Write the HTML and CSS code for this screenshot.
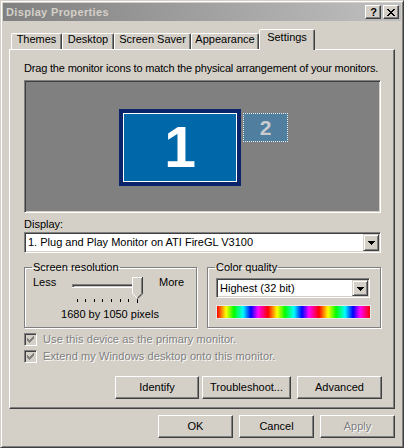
FILE: index.html
```html
<!DOCTYPE html>
<html>
<head>
<meta charset="utf-8">
<title>Display Properties</title>
<link rel="stylesheet" href="styles.css">
</head>
<body>
<div class="window">
  <div class="titlebar">
    <span class="title">Display Properties</span>
    <div class="caption-btns">
      <span class="cbtn help">?</span>
      <span class="cbtn close"><svg width="8" height="7" viewBox="0 0 8 7" shape-rendering="crispEdges"><path fill="#000" d="M0 0h2v1h-2z M6 0h2v1h-2z M1 1h2v1h-2z M5 1h2v1h-2z M2 2h4v1h-4z M3 3h2v1h-2z M2 4h4v1h-4z M1 5h2v1h-2z M5 5h2v1h-2z M0 6h2v1h-2z M6 6h2v1h-2z"/></svg></span>
    </div>
  </div>
  <div class="client">
    <div class="tabs">
      <span class="tab w-themes">Themes</span>
      <span class="tab w-desktop">Desktop</span>
      <span class="tab w-saver">Screen Saver</span>
      <span class="tab w-appear">Appearance</span>
      <span class="tab sel">Settings</span>
    </div>
    <div class="panel">
      <p class="hint">Drag the monitor icons to match the physical arrangement of your monitors.</p>
      <div class="monitors">
        <div class="mon mon1"><div class="mon1-inner">1</div></div>
        <div class="mon mon2">2</div>
      </div>
      <div class="label">Display:</div>
      <div class="combo wide">
        <span class="combo-text">1. Plug and Play Monitor on ATI FireGL V3100</span>
        <span class="drop"><svg width="7" height="4" viewBox="0 0 7 4" shape-rendering="crispEdges"><path fill="#000" d="M0 0h7v1h-1v1h-1v1h-1v1h-1v-1h-1v-1h-1v-1h-1z"/></svg></span>
      </div>
      <div class="groups">
        <fieldset class="group res">
          <legend>Screen resolution</legend>
          <div class="slider-row">
            <span class="less">Less</span>
            <svg class="slider" width="76" height="28" viewBox="0 0 76 28">
              <g shape-rendering="crispEdges">
                <rect x="2" y="8" width="68" height="1" fill="#808080"/>
                <rect x="2" y="8" width="1" height="3" fill="#808080"/>
                <rect x="3" y="9" width="66" height="1" fill="#404040"/>
                <rect x="3" y="9" width="1" height="2" fill="#404040"/>
                <rect x="2" y="11" width="69" height="1" fill="#ffffff"/>
                <rect x="70" y="8" width="1" height="4" fill="#ffffff"/>
                <rect x="7" y="23" width="1" height="3" fill="#000"/>
                <rect x="15" y="23" width="1" height="3" fill="#000"/>
                <rect x="24" y="23" width="1" height="3" fill="#000"/>
                <rect x="32" y="23" width="1" height="3" fill="#000"/>
                <rect x="41" y="23" width="1" height="3" fill="#000"/>
                <rect x="50" y="23" width="1" height="3" fill="#000"/>
                <rect x="58" y="23" width="1" height="3" fill="#000"/>
                <rect x="67" y="23" width="1" height="4" fill="#000"/>
              </g>
              <polygon points="62,1 73,1 73,18 67.5,23.5 62,18" fill="#d4d0c8"/>
              <polyline points="62.5,18 62.5,1.5 72,1.5" fill="none" stroke="#ffffff" stroke-width="1"/>
              <line x1="62.5" y1="17.5" x2="67.5" y2="22.5" stroke="#ffffff" stroke-width="1"/>
              <polyline points="72.5,1 72.5,17.8 67.5,22.8" fill="none" stroke="#404040" stroke-width="1"/>
              <polyline points="71.5,2 71.5,17.5 67.5,21.5" fill="none" stroke="#808080" stroke-width="1"/>
            </svg>
            <span class="more">More</span>
          </div>
          <div class="res-text">1680 by 1050 pixels</div>
        </fieldset>
        <fieldset class="group color">
          <legend>Color quality</legend>
          <div class="combo small">
            <span class="combo-text">Highest (32 bit)</span>
            <span class="drop"><svg width="7" height="4" viewBox="0 0 7 4" shape-rendering="crispEdges"><path fill="#000" d="M0 0h7v1h-1v1h-1v1h-1v1h-1v-1h-1v-1h-1v-1h-1z"/></svg></span>
          </div>
          <div class="colorbar"></div>
        </fieldset>
      </div>
      <div class="check first">
        <span class="cb"><svg width="11" height="11" viewBox="0 0 11 11" shape-rendering="crispEdges"><path fill="#808080" d="M2 4h1v1h1v1h1v-1h1v-1h1v-1h1v-1h1v3h-1v1h-1v1h-1v1h-1v1h-1v-1h-1v-1h-1z"/></svg></span>
        <span class="dis">Use this device as the primary monitor.</span>
      </div>
      <div class="check">
        <span class="cb"><svg width="11" height="11" viewBox="0 0 11 11" shape-rendering="crispEdges"><path fill="#808080" d="M2 4h1v1h1v1h1v-1h1v-1h1v-1h1v-1h1v3h-1v1h-1v1h-1v1h-1v1h-1v-1h-1v-1h-1z"/></svg></span>
        <span class="dis">Extend my Windows desktop onto this monitor.</span>
      </div>
      <div class="panel-btns">
        <button class="btn b-identify">Identify</button>
        <button class="btn b-trouble">Troubleshoot...</button>
        <button class="btn b-advanced">Advanced</button>
      </div>
    </div>
    <div class="dialog-btns">
      <button class="btn b-dlg">OK</button>
      <button class="btn b-dlg">Cancel</button>
      <button class="btn b-dlg dis-btn">Apply</button>
    </div>
  </div>
</div>
</body>
</html>
```

FILE: styles.css
```css
* { box-sizing: border-box; }
html, body { margin: 0; padding: 0; }
body {
  width: 404px;
  height: 448px;
  overflow: hidden;
  background: #d4d0c8;
  font: 11px/13px "Liberation Sans", Arial, sans-serif;
  color: #000;
}
.window {
  width: 404px;
  height: 448px;
  border: 1px solid;
  border-color: #d4d0c8 #404040 #404040 #d4d0c8;
  box-shadow: inset 1px 1px #fff, inset -1px -1px #808080;
  padding: 2px;
  display: flex;
  flex-direction: column;
}
.titlebar {
  height: 18px;
  flex: none;
  background: linear-gradient(to right, #808080, #c0c0c0);
  display: flex;
  align-items: center;
  justify-content: space-between;
  padding: 0 2px 0 3px;
}
.title { color: #d4d0c8; font-weight: bold; letter-spacing: 0.35px; }
.caption-btns { display: flex; gap: 2px; }
.cbtn {
  width: 16px;
  height: 14px;
  background: #d4d0c8;
  border: 1px solid;
  border-color: #fff #404040 #404040 #fff;
  box-shadow: inset -1px -1px #808080;
  display: flex;
  align-items: center;
  justify-content: center;
}
.help { font-weight: bold; font-size: 11px; line-height: 12px; padding-left: 1px; }
.client {
  flex: 1;
  padding: 8px 6px 0 6px;
  display: flex;
  flex-direction: column;
}
.tabs {
  height: 20px;
  display: flex;
  align-items: flex-end;
  padding-left: 2px;
}
.tab {
  height: 16px;
  border: 1px solid;
  border-bottom: none;
  border-color: #fff #404040 transparent #fff;
  border-radius: 2px 2px 0 0;
  box-shadow: inset -1px 0 #808080;
  text-align: center;
  line-height: 11px;
  white-space: nowrap;
}
.w-themes { width: 51px; }
.w-desktop { width: 52px; }
.w-saver { width: 77px; }
.w-appear { width: 68px; }
.tab.sel {
  width: 56px;
  height: 21px;
  margin-bottom: -1px;
  padding-top: 2px;
  background: #d4d0c8;
  position: relative;
  z-index: 1;
}
.panel {
  height: 360px;
  flex: none;
  border: 1px solid;
  border-color: #fff #404040 #404040 #fff;
  box-shadow: inset -1px -1px #808080;
  padding: 12px 13px 0 14px;
}
.hint { margin: 0; white-space: nowrap; letter-spacing: -0.18px; }
.monitors {
  margin-top: 5px;
  height: 133px;
  position: relative;
  background: #808080;
  border: 1px solid;
  border-color: #808080 #fff #fff #808080;
  box-shadow: inset 1px 1px #404040, inset -1px -1px #d4d0c8;
}
.mon { position: absolute; }
.mon1 {
  left: 94px;
  top: 28px;
  width: 122px;
  height: 77px;
  border: 4px solid #0a246a;
}
.mon1-inner {
  width: 100%;
  height: 100%;
  border: 1px solid #fff;
  background: #0067a8;
  color: #fff;
  font-weight: bold;
  font-size: 57px;
  line-height: 1;
  display: flex;
  align-items: center;
  justify-content: center;
}
.mon2 {
  left: 218px;
  top: 32px;
  width: 45px;
  height: 29px;
  border: 1px dotted #f0f0f0;
  background: #4f7e9e;
  color: #c8ccd0;
  font-weight: bold;
  font-size: 21px;
  line-height: 1;
  display: flex;
  align-items: center;
  justify-content: center;
}
.label { margin-top: 5px; }
.combo {
  display: flex;
  background: #fff;
  border: 1px solid;
  border-color: #808080 #fff #fff #808080;
  box-shadow: inset 1px 1px #404040, inset -1px -1px #d4d0c8;
  padding: 1px;
}
.combo.wide { margin-top: 1px; height: 21px; }
.combo.small { margin-top: 2px; height: 20px; width: 154px; }
.combo-text {
  flex: 1;
  padding-left: 2px;
  display: flex;
  align-items: center;
  white-space: nowrap;
  overflow: hidden;
}
.drop {
  width: 16px;
  background: #d4d0c8;
  border: 1px solid;
  border-color: #d4d0c8 #404040 #404040 #d4d0c8;
  box-shadow: inset 1px 1px #fff, inset -1px -1px #808080;
  display: flex;
  align-items: center;
  justify-content: center;
  padding-top: 1px;
}
.groups {
  margin-top: 8px;
  display: grid;
  grid-template-columns: 173px 174px;
  column-gap: 10px;
}
.group {
  margin: 0;
  min-width: 0;
  padding: 2px 8px 6px 8px;
  border: 1px solid #808080;
  box-shadow: 1px 1px 0 #fff, inset 1px 1px 0 #fff;
}
.group legend {
  padding: 0 1px;
  margin-left: -1px;
  line-height: 13px;
}
.slider-row {
  display: flex;
  align-items: flex-start;
  height: 28px;
}
.less { width: 37px; flex: none; }
.slider { flex: none; display: block; }
.more { margin-left: 13px; }
.res-text { margin-top: 4px; text-align: center; padding-right: 1px; }
.colorbar {
  margin-top: 7px;
  width: 155px;
  height: 14px;
  border: 1px solid #e8e8e8;
  background: repeating-linear-gradient(to right,
    #ff0000 0px, #ffff00 9px, #00ff00 17px, #00ffff 26px, #0000ff 34px, #ff00ff 41px, #ff0000 51px);
}
.check {
  margin-top: 4px;
  display: flex;
  align-items: center;
  height: 13px;
}
.check.first { margin-top: 5px; }
.cb {
  width: 13px;
  height: 13px;
  flex: none;
  border: 1px solid;
  border-color: #808080 #fff #fff #808080;
  box-shadow: inset 1px 1px #404040, inset -1px -1px #d4d0c8;
  background: #d4d0c8;
  display: block;
}
.cb svg { display: block; }
.dis {
  margin-left: 6px;
  color: #808080;
  text-shadow: 1px 1px 0 #fff;
  white-space: nowrap;
  letter-spacing: 0.1px;
}
.btn {
  height: 23px;
  margin: 0;
  padding: 0;
  background: #d4d0c8;
  border: 1px solid;
  border-color: #fff #404040 #404040 #fff;
  box-shadow: inset -1px -1px #808080;
  font: 11px/13px "Liberation Sans", Arial, sans-serif;
  color: #000;
}
.panel-btns {
  margin-top: 13px;
  display: flex;
  justify-content: flex-end;
  margin-right: -1px;
}
.b-identify { width: 84px; }
.b-trouble { width: 89px; margin-left: 3px; }
.b-advanced { width: 85px; margin-left: 6px; }
.dialog-btns {
  margin-top: 6px;
  display: flex;
  justify-content: flex-end;
  gap: 6px;
}
.b-dlg { width: 75px; }
.dis-btn { color: #808080; text-shadow: 1px 1px 0 #fff; }
```
